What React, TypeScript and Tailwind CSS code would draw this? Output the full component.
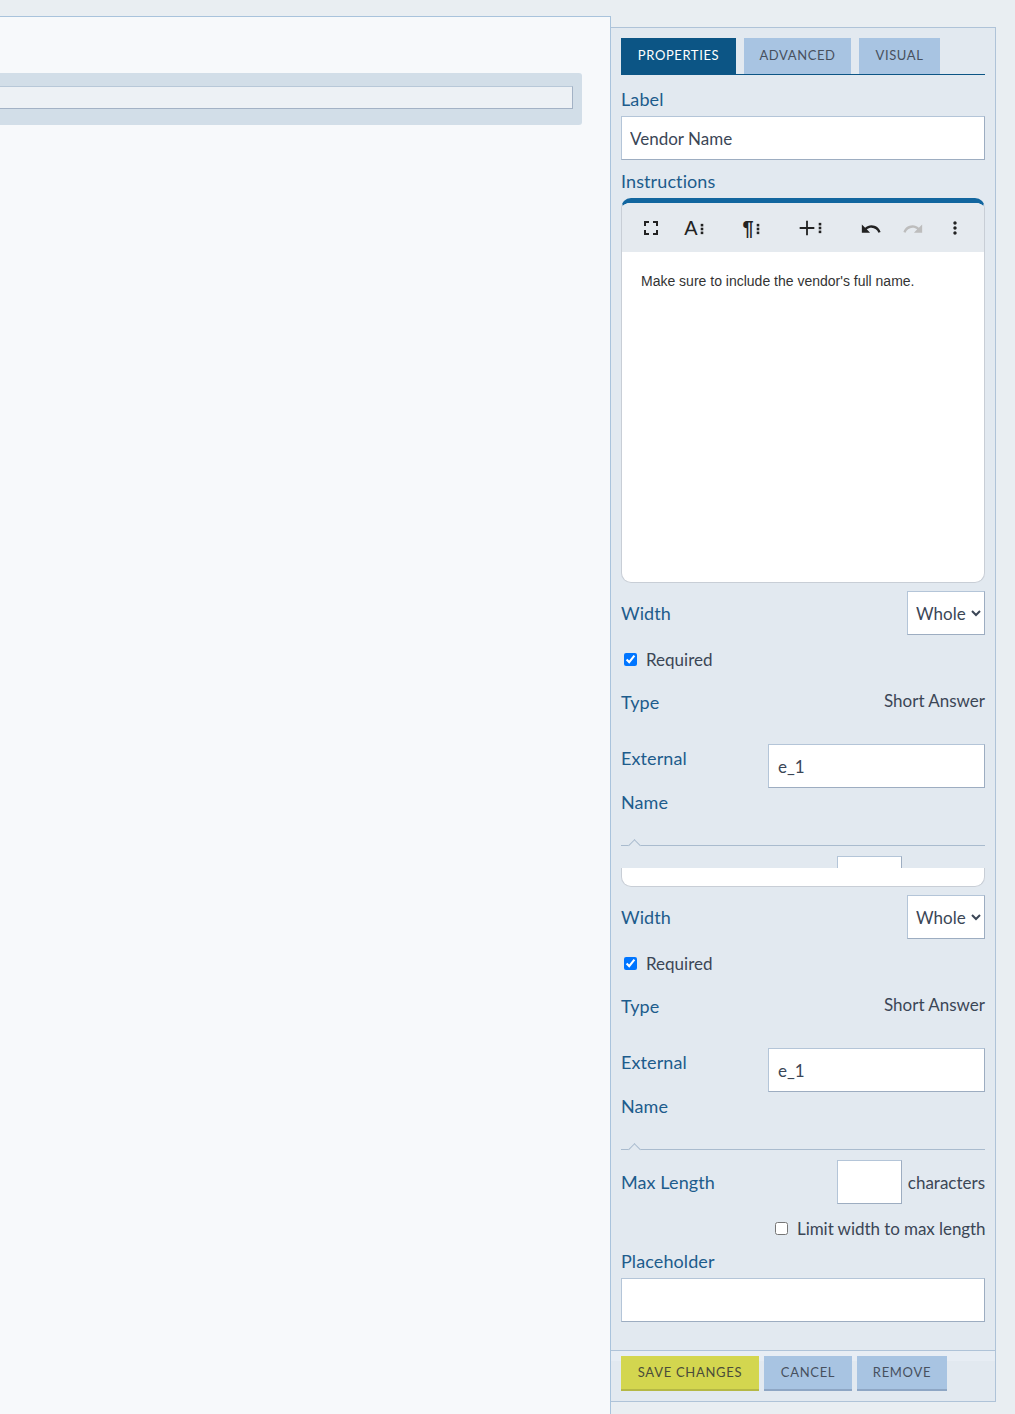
const labelClass = 'text-[18px] leading-6 text-[#1d5c8c] tracking-[0.1px]'
const valueClass = 'pt-[2px] text-[17px] text-[#3b4656]'
const inputClass =
  'block bg-white border border-[#b4c5d8] border-r-[#9dadc1] border-b-[#9dadc1] outline-none'
const tabClass = 'flex items-center justify-center text-[13px] tracking-[0.6px]'
const footerButtonClass =
  'h-[35px] flex items-center justify-center border-b-2 text-[13px] tracking-[0.7px]'

function Icon({ d, className }: { d: string; className?: string }) {
  return (
    <svg viewBox="0 0 24 24" className={className ?? 'w-6 h-6'} fill="currentColor">
      <path d={d} />
    </svg>
  )
}

function Dots({ className }: { className?: string }) {
  return (
    <svg viewBox="0 0 4 14" className={className ?? 'w-[4px] h-[14px]'} fill="currentColor">
      <rect x="0.5" y="1" width="3" height="3" />
      <rect x="0.5" y="5.5" width="3" height="3" />
      <rect x="0.5" y="10" width="3" height="3" />
    </svg>
  )
}

function Toolbar() {
  return (
    <div className="flex items-center h-[49px] pl-[9px] bg-[#e5eaef] text-[#222222]">
      <div className="w-10 flex justify-center">
        <Icon d="M7 14H5v5h5v-2H7v-3zm-2-4h2V7h3V5H5v5zm12 7h-3v2h5v-5h-2v3zM14 5v2h3v3h2V5h-5z" />
      </div>
      <div className="w-10 ml-[3px] flex justify-center items-center gap-[2px]">
        <span className="font-['Liberation_Sans',sans-serif] text-[20px] leading-6 mt-[1px]">A</span>
        <Dots className="w-[4px] h-[12px] mt-[3px]" />
      </div>
      <div className="w-10 ml-[17px] flex justify-center items-center gap-[2px]">
        <span className="font-['Liberation_Sans',sans-serif] font-bold text-[20px] leading-6">¶</span>
        <Dots className="w-[4px] h-[12px] mt-[2px]" />
      </div>
      <div className="w-10 ml-[18px] flex justify-center items-center">
        <Icon d="M20 13h-7v7h-2v-7H4v-2h7V4h2v7h7v2z" className="w-[22px] h-[22px]" />
        <Dots className="w-[4px] h-[12px] mt-[1px]" />
      </div>
      <div className="w-10 ml-[22px] flex justify-center">
        <Icon
          d="M12.5 8c-2.65 0-5.05.99-6.9 2.6L2 7v9h9l-3.62-3.62c1.39-1.16 3.16-1.88 5.12-1.88 3.54 0 6.55 2.31 7.6 5.5l2.37-.78C21.08 11.03 17.15 8 12.5 8z"
          className="w-[22px] h-[22px] mt-[2px]"
        />
      </div>
      <div className="w-10 ml-[2px] flex justify-center text-[#bdbdbd]">
        <Icon
          d="M18.4 10.6C16.55 8.99 14.15 8 11.5 8c-4.65 0-8.58 3.03-9.96 7.22L3.9 16c1.05-3.19 4.05-5.5 7.6-5.5 1.95 0 3.73.72 5.12 1.88L13 16h9V7l-3.6 3.6z"
          className="w-[22px] h-[22px] mt-[2px]"
        />
      </div>
      <div className="w-10 ml-[2px] flex justify-center">
        <Icon
          d="M12 8c1.1 0 2-.9 2-2s-.9-2-2-2-2 .9-2 2 .9 2 2 2zm0 2c-1.1 0-2 .9-2 2s.9 2 2 2 2-.9 2-2-.9-2-2-2zm0 6c-1.1 0-2 .9-2 2s.9 2 2 2 2-.9 2-2-.9-2-2-2z"
          className="w-5 h-5"
        />
      </div>
    </div>
  )
}

function Divider() {
  return (
    <div className="relative h-px mt-[21px] bg-[#a9bbce]">
      <div className="absolute left-[9px] -top-[4px] w-[9px] h-[9px] rotate-45 bg-[#e2e9f0] border-t border-l border-[#a9bbce]" />
    </div>
  )
}

function SharedFields() {
  return (
    <>
      <div className="flex items-center justify-between h-[44px] mt-[8px]">
        <span className={labelClass}>Width</span>
        <select
          defaultValue="Whole"
          className={`${inputClass} w-[78px] h-[44px] pl-[4px] text-[17px] text-[#3b4656]`}
        >
          <option>Whole</option>
        </select>
      </div>
      <label className="flex items-center h-[48px] pl-[3px]">
        <input type="checkbox" defaultChecked className="w-[13px] h-[13px]" />
        <span className={`${valueClass} ml-[9px]`}>Required</span>
      </label>
      <div className="flex items-start justify-between h-[38px]">
        <span className={`${labelClass} mt-[7px]`}>Type</span>
        <span className={`${valueClass} leading-6 mt-[4px]`}>Short Answer</span>
      </div>
      <div className="flex items-start justify-between mt-[15px] h-[88px]">
        <span className="w-[90px] text-[18px] leading-[44px] text-[#1d5c8c] tracking-[0.1px]">External Name</span>
        <input
          readOnly
          value="e_1"
          className={`${inputClass} w-[217px] h-[44px] mt-[8px] pl-[9px] text-[17px] text-[#3b4656]`}
        />
      </div>
      <Divider />
    </>
  )
}

export default function App() {
  return (
    <div className="flex w-[1015px] h-[1414px] overflow-hidden bg-[#e9eef2] font-['Lato',sans-serif]">
      {/* form canvas */}
      <div className="w-[611px] h-[1398px] mt-[16px] shrink-0 bg-[#f7f9fb] border-t border-r border-[#a9c3dc]">
        <div className="w-[582px] h-[52px] mt-[56px] pt-[13px] pr-[9px] bg-[#d2dee8] rounded-r-[3px]">
          <div className="h-[23px] bg-[#edf1f5] border border-l-0 border-[#b8c8d8] border-r-[#a3b2c5] border-b-[#a3b2c5]" />
        </div>
      </div>

      {/* properties panel */}
      <div className="w-[385px] h-[1375px] mt-[27px] shrink-0 flex flex-col bg-[#e2e9f0] border-t border-r border-b border-[#afc3d8]">
        <div className="flex-1 px-[10px] pt-[10px] min-h-0">
          <div className="flex gap-[8px] h-[37px] border-b border-[#0c5585]">
            <div className={`${tabClass} w-[115px] bg-[#0c5585] text-white`}>PROPERTIES</div>
            <div className={`${tabClass} w-[107px] bg-[#a8c4e2] text-[#47505e]`}>ADVANCED</div>
            <div className={`${tabClass} w-[81px] bg-[#a8c4e2] text-[#47505e]`}>VISUAL</div>
          </div>

          <div className={`${labelClass} pt-[12px] h-[41px]`}>Label</div>
          <input
            readOnly
            value="Vendor Name"
            className={`${inputClass} w-full h-[44px] pl-[8px] text-[17px] text-[#3b4656]`}
          />
          <div className={`${labelClass} pt-[9px] h-[38px]`}>Instructions</div>

          <div className="h-[385px] bg-white rounded-[10px] border border-[#c8ced6] border-t-[5px] border-t-[#12669f] overflow-hidden">
            <Toolbar />
            <p className="pl-[19px] pt-[20px] font-['Liberation_Sans',sans-serif] text-[14px] leading-[18px] text-[#333333]">
              Make sure to include the vendor's full name.
            </p>
          </div>

          <SharedFields />

          {/* scrolled copy of the field list starts here */}
          <div className="h-[12px] mt-[10px] ml-[216px] w-[65px] bg-white border-t border-x border-[#b4c5d8] border-r-[#9dadc1]" />
          <div className="h-[19px] bg-white rounded-b-[10px] border border-t-0 border-[#c8ced6]" />

          <SharedFields />

          <div className="flex items-center mt-[10px] h-[44px]">
            <span className={`${labelClass} flex-1`}>Max Length</span>
            <input readOnly className={`${inputClass} w-[65px] h-[44px] text-[16px]`} />
            <span className={`${valueClass} w-[83px] text-right`}>characters</span>
          </div>
          <label className="flex items-center justify-end mt-[12px] h-[24px]">
            <input type="checkbox" className="w-[13px] h-[13px]" />
            <span className={`${valueClass} w-[188px] ml-[9px] text-right whitespace-nowrap tracking-[-0.06px]`}>
              Limit width to max length
            </span>
          </label>
          <div className={`${labelClass} mt-[9px]`}>Placeholder</div>
          <input readOnly className={`${inputClass} w-full h-[44px] mt-[5px] text-[16px]`} />
        </div>

        <div className="h-[51px] shrink-0 flex gap-[5px] px-[10px] pt-[5px] border-t border-[#afc3d8] bg-[linear-gradient(#e7edf4_10px,transparent_10px)]">
          <div className={`${footerButtonClass} w-[138px] bg-[#d3d64f] border-[#b5b845] text-[#4a4c3a]`}>SAVE CHANGES</div>
          <div className={`${footerButtonClass} w-[88px] bg-[#a8c4e2] border-[#8ea6c4] text-[#47505e]`}>CANCEL</div>
          <div className={`${footerButtonClass} w-[90px] bg-[#a8c4e2] border-[#8ea6c4] text-[#47505e]`}>REMOVE</div>
        </div>
      </div>
    </div>
  )
}
